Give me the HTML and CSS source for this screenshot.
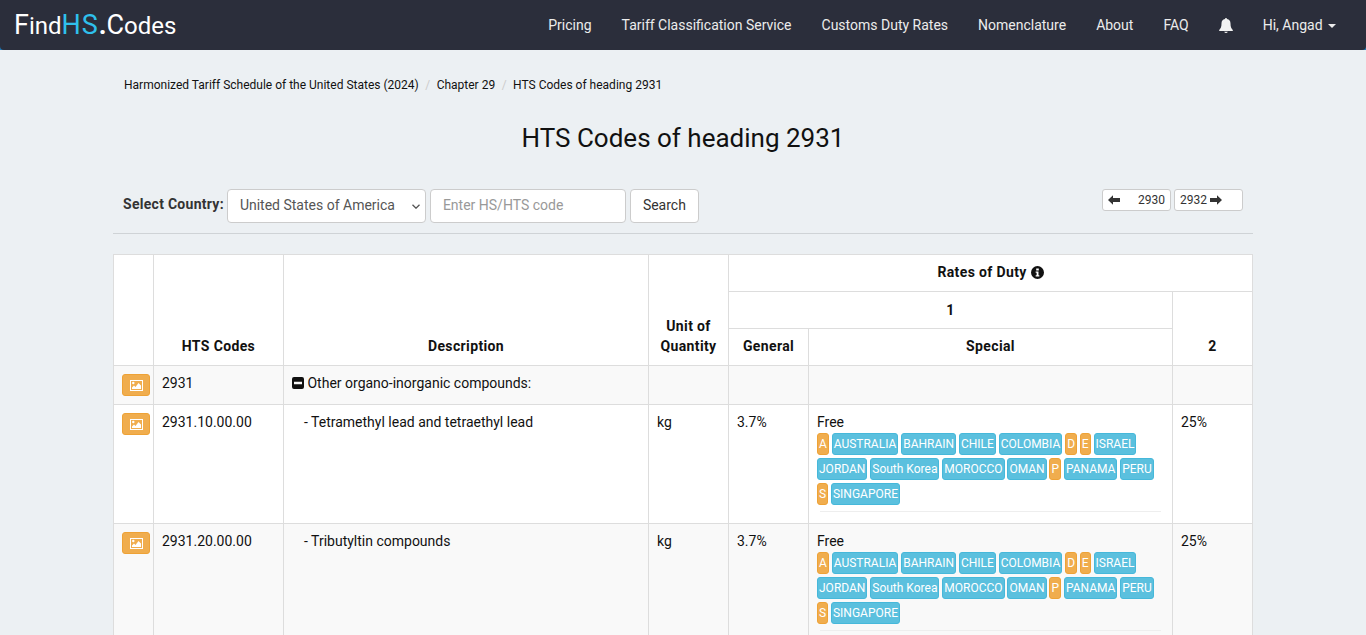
FILE: index.html
```html
<!DOCTYPE html>
<html lang="en">
<head>
<meta charset="utf-8">
<title>HTS Codes of heading 2931</title>
<link rel="stylesheet" href="styles.css">
</head>
<body>
<header class="topbar">
<nav class="navbar">
  <a class="brand" href="#"><span class="brand-cap">F</span>ind<span class="brand-hs">HS</span><span class="brand-dot">.</span><span class="brand-cap">C</span>odes</a>
  <ul class="nav">
    <li><a href="#">Pricing</a></li>
    <li><a href="#">Tariff Classification Service</a></li>
    <li><a href="#">Customs Duty Rates</a></li>
    <li><a href="#">Nomenclature</a></li>
    <li><a href="#">About</a></li>
    <li><a href="#">FAQ</a></li>
    <li><a href="#" class="bell"><svg width="14" height="15" viewBox="0 0 14 15"><path fill="#f2f2f2" d="M7 0a1 1 0 0 1 1 1.100C10.300 1.500 11.500 3.300 11.500 5.500c0 3.600.8 5 2.300 6.500v1H.2v-1C1.700 10.500 2.500 9.100 2.500 5.500 2.500 3.300 3.700 1.500 6 1.100A1 1 0 0 1 7 0zM5.200 13.700h3.600A1.900 1.900 0 0 1 7 15a1.900 1.900 0 0 1-1.800-1.300z"/></svg></a></li>
    <li><a href="#">Hi, Angad <span class="caret"></span></a></li>
  </ul>
</nav>
</header>
<main class="container">
  <ol class="breadcrumb">
    <li><a href="#">Harmonized Tariff Schedule of the United States (2024)</a></li>
    <li><a href="#">Chapter 29</a></li>
    <li><a href="#">HTS Codes of heading 2931</a></li>
  </ol>
  <h1 class="title">HTS Codes of heading 2931</h1>
  <div class="toolbar">
    <form class="search">
      <label class="search-label">Select Country:</label>
      <select class="control country"><option>United States of America</option></select>
      <input class="control code" type="text" placeholder="Enter HS/HTS code">
      <button class="btn" type="button">Search</button>
    </form>
    <div class="pager">
      <a class="page-btn prev" href="#"><svg class="arrow" width="12" height="10" viewBox="0 0 12 10"><path fill="#333" d="M0 5l5-4.800V3h7v4H5v2.800z"/></svg><span>2930</span></a>
      <a class="page-btn next" href="#"><span>2932</span><svg class="arrow" width="12" height="10" viewBox="0 0 12 10"><path fill="#333" d="M12 5L7 .2V3H0v4h7v2.800z"/></svg></a>
    </div>
  </div>
  <hr class="rule">
  <table class="hts">
    <colgroup>
      <col class="c-img"><col class="c-code"><col class="c-desc"><col class="c-unit"><col class="c-gen"><col class="c-spec"><col class="c-two">
    </colgroup>
    <thead>
      <tr>
        <th rowspan="3"></th>
        <th rowspan="3">HTS Codes</th>
        <th rowspan="3">Description</th>
        <th rowspan="3">Unit of Quantity</th>
        <th colspan="3">Rates of Duty <svg class="info" width="13" height="13" viewBox="0 0 12 12"><path fill="#111" fill-rule="evenodd" d="M6 0a6 6 0 1 1 0 12A6 6 0 0 1 6 0zM4.800 2.200v1.900h2.400V2.200zM4.300 5v1.200h.9v2.400h-.9v1.200h3.400V8.600h-.8V5z"/></svg></th>
      </tr>
      <tr>
        <th colspan="2" class="mid">1</th>
        <th rowspan="2">2</th>
      </tr>
      <tr>
        <th>General</th>
        <th>Special</th>
      </tr>
    </thead>
    <tbody>
      <tr class="odd">
        <td class="img-cell"><a class="img-btn" href="#"><svg width="13" height="11" viewBox="0 0 13 11"><path fill="#fff" fill-rule="evenodd" d="M0 0h13v11H0zM1 1v9h11V1z"/><path fill="#fff" d="M2 9V7.500L4 5.500l1.500 1.500L8.500 3 11 5.500V9z"/><circle fill="#fff" cx="3.300" cy="3" r="1.200"/></svg></a></td>
        <td>2931</td>
        <td><svg class="minus" width="12" height="12" viewBox="0 0 12 12"><path fill="#111" fill-rule="evenodd" d="M2 0h8a2 2 0 0 1 2 2v8a2 2 0 0 1-2 2H2a2 2 0 0 1-2-2V2a2 2 0 0 1 2-2zM2 4.800v2.400h8V4.800z"/></svg> Other organo-inorganic compounds:</td>
        <td></td><td></td><td></td><td></td>
      </tr>
      <tr>
        <td class="img-cell"><a class="img-btn" href="#"><svg width="13" height="11" viewBox="0 0 13 11"><path fill="#fff" fill-rule="evenodd" d="M0 0h13v11H0zM1 1v9h11V1z"/><path fill="#fff" d="M2 9V7.500L4 5.500l1.500 1.500L8.500 3 11 5.500V9z"/><circle fill="#fff" cx="3.300" cy="3" r="1.200"/></svg></a></td>
        <td>2931.10.00.00</td>
        <td><span class="indent">- Tetramethyl lead and tetraethyl lead</span></td>
        <td>kg</td>
        <td>3.7%</td>
        <td class="special">
          Free
          <div class="labels">
            <span class="lbl warn">A</span><span class="lbl info-l">AUSTRALIA</span><span class="lbl info-l">BAHRAIN</span><span class="lbl info-l">CHILE</span><span class="lbl info-l">COLOMBIA</span><span class="lbl warn">D</span><span class="lbl warn">E</span><span class="lbl info-l">ISRAEL</span><span class="lbl info-l">JORDAN</span><span class="lbl info-l">South Korea</span><span class="lbl info-l">MOROCCO</span><span class="lbl info-l">OMAN</span><span class="lbl warn">P</span><span class="lbl info-l">PANAMA</span><span class="lbl info-l">PERU</span><span class="lbl warn">S</span><span class="lbl info-l">SINGAPORE</span>
          </div>
          <hr class="cell-rule">
        </td>
        <td>25%</td>
      </tr>
      <tr class="odd">
        <td class="img-cell"><a class="img-btn" href="#"><svg width="13" height="11" viewBox="0 0 13 11"><path fill="#fff" fill-rule="evenodd" d="M0 0h13v11H0zM1 1v9h11V1z"/><path fill="#fff" d="M2 9V7.500L4 5.500l1.500 1.500L8.500 3 11 5.500V9z"/><circle fill="#fff" cx="3.300" cy="3" r="1.200"/></svg></a></td>
        <td>2931.20.00.00</td>
        <td><span class="indent">- Tributyltin compounds</span></td>
        <td>kg</td>
        <td>3.7%</td>
        <td class="special">
          Free
          <div class="labels">
            <span class="lbl warn">A</span><span class="lbl info-l">AUSTRALIA</span><span class="lbl info-l">BAHRAIN</span><span class="lbl info-l">CHILE</span><span class="lbl info-l">COLOMBIA</span><span class="lbl warn">D</span><span class="lbl warn">E</span><span class="lbl info-l">ISRAEL</span><span class="lbl info-l">JORDAN</span><span class="lbl info-l">South Korea</span><span class="lbl info-l">MOROCCO</span><span class="lbl info-l">OMAN</span><span class="lbl warn">P</span><span class="lbl info-l">PANAMA</span><span class="lbl info-l">PERU</span><span class="lbl warn">S</span><span class="lbl info-l">SINGAPORE</span>
          </div>
          <hr class="cell-rule">
        </td>
        <td>25%</td>
      </tr>
    </tbody>
  </table>
</main>
</body>
</html>
```

FILE: styles.css
```css
* { box-sizing: border-box; }
html, body { margin: 0; padding: 0; height: 635px; overflow: hidden; }
body {
  background: #ecf0f3;
  color: #111;
  font-family: Roboto, "Liberation Sans", sans-serif;
  font-size: 14px;
  line-height: 20px;
}
a { color: inherit; text-decoration: none; }

.topbar { background: #1f7ab8; }
.navbar {
  display: flex;
  justify-content: space-between;
  align-items: center;
  height: 50px;
  padding: 0 15px;
  background: #2b2e3b;
  border-radius: 0 0 4px 4px;
}
.brand {
  color: #fff;
  font-size: 24px;
  line-height: 50px;
  margin-left: -1px;
}
.brand-cap { font-size: 27px; }
.brand-hs { color: #2fc0ec; font-size: 27px; letter-spacing: .9px; }
.brand-dot { font-size: 27px; font-weight: 700; }
.nav {
  display: flex;
  list-style: none;
  margin: 0;
  padding: 0;
}
.nav a {
  display: block;
  padding: 15px;
  color: #ececec;
  line-height: 20px;
}
.bell { display: flex !important; align-items: center; height: 50px; }
.caret {
  display: inline-block;
  width: 0;
  height: 0;
  margin-left: 2px;
  vertical-align: middle;
  border-top: 4px solid #ececec;
  border-left: 4px solid transparent;
  border-right: 4px solid transparent;
}

.container {
  width: 1140px;
  margin: 0 0 0 113px;
}
.breadcrumb {
  display: flex;
  list-style: none;
  margin: 0;
  padding: 25px 11px 0;
  font-size: 12px;
  color: #111;
}
.breadcrumb li + li::before {
  content: "/";
  color: #ccc;
  padding: 0 6.500px;
}
.title {
  margin: 0;
  padding-top: 28px;
  text-align: center;
  font-size: 26px;
  font-weight: 400;
  line-height: 30px;
  color: #111;
}
.toolbar {
  display: flex;
  justify-content: space-between;
  align-items: flex-start;
  margin-top: 36px;
  padding: 0 10px;
}
.search { display: flex; align-items: center; gap: 4px; }
.search-label { font-weight: 700; color: #333; letter-spacing: .28px; position: relative; top: -2px; margin-right: -1px; }
.control, .btn {
  height: 34px;
  border: 1px solid #ccc;
  border-radius: 4px;
  background: #fff;
  color: #555;
  font-family: inherit;
  font-size: 14px;
  padding: 5px 12px 7px;
}
.country {
  width: 199px;
  padding-right: 20px;
  appearance: none;
  background-image: url("data:image/svg+xml,%3Csvg xmlns='http://www.w3.org/2000/svg' width='8' height='5' viewBox='0 0 8 5'%3E%3Cpath fill='none' stroke='%23555' stroke-width='1.300' d='M.5.7L4 4.200 7.500.7'/%3E%3C/svg%3E");
  background-repeat: no-repeat;
  background-position: right 5px center;
}
.code { width: 196px; }
.code::placeholder { color: #999; opacity: 1; }
.btn { color: #333; width: 69px; padding: 5px 0 7px; text-align: center; }
.pager { display: flex; gap: 3px; }
.page-btn {
  display: flex;
  align-items: center;
  justify-content: space-between;
  width: 69px;
  height: 22px;
  padding: 0 5px;
  background: #fff;
  border: 1px solid #ccc;
  border-radius: 3px;
  font-size: 12px;
  line-height: 18px;
  color: #333;
}
.next { justify-content: flex-start; gap: 3px; }
.rule {
  margin: 10px 0 20px;
  border: 0;
  border-top: 1px solid #cfd3d6;
}

.hts {
  width: 1139px;
  table-layout: fixed;
  border-collapse: collapse;
  background: #fff;
  color: #111;
}
.c-img { width: 40px; }
.c-code { width: 130px; }
.c-desc { width: 365px; }
.c-unit { width: 80px; }
.c-gen { width: 80px; }
.c-spec { width: 364px; }
.c-two { width: 80px; }
.hts th, .hts td {
  border: 1px solid #ddd;
  padding: 7px 8px 8px;
  vertical-align: top;
}
.hts th {
  vertical-align: bottom;
  text-align: center;
  font-weight: 700;
  letter-spacing: .37px;
  height: 37px;
  padding: 7px 8px 9px;
}
.hts th.mid { padding: 8px 8px 8px; }
.info { vertical-align: -2px; }
.odd td { background: #f9f9f9; }
.hts .img-cell { padding: 8px 0 8px 8px; }
.img-btn {
  display: flex;
  align-items: center;
  justify-content: center;
  width: 28px;
  height: 22px;
  background: #f0ad4e;
  border: 1px solid #eea236;
  border-radius: 3px;
}
.minus { vertical-align: -1px; }
.indent { padding-left: 12px; }
.labels { display: block; margin-top: 1px; }
.lbl {
  display: inline-block;
  height: 22px;
  line-height: 20px;
  padding: 0 1px;
  margin-right: 2.850px;
  margin-bottom: 3px;
  border-radius: 3px;
  font-size: 12px;
  color: #fff;
  border: 1px solid transparent;
  vertical-align: top;
}
.warn { background: #f0ad4e; border-color: #eea236; }
.info-l { background: #5bc0de; border-color: #46b8da; }
.cell-rule {
  margin: 3px 3px 0;
  border: 0;
  border-top: 1px solid #eee;
}
.hts .special { padding-bottom: 11px; }
```
